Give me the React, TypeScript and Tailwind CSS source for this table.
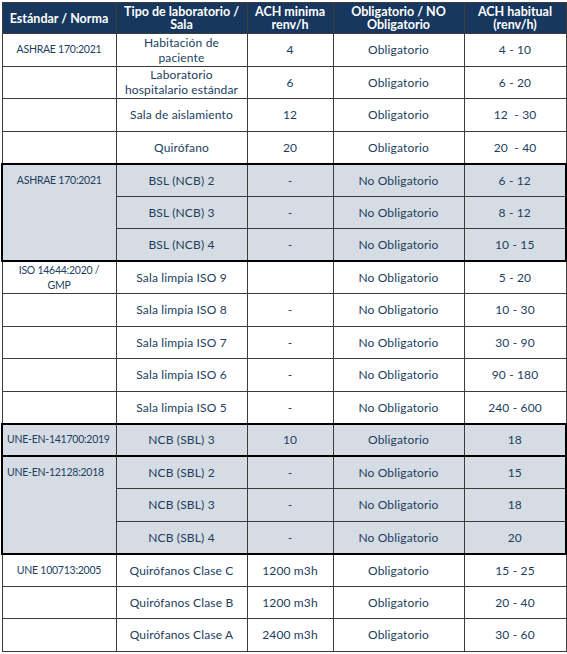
import { Fragment } from 'react'

type Row = [string, string, string, string, string]

type Group = {
	shaded: boolean
	// how the first column is drawn: one cell per row, or one spanning cell
	span?: 'center' | 'left'
	align?: 'left'
	rows: Row[]
}

const groups: Group[] = [
	{
		shaded: false,
		rows: [
			['ASHRAE 170:2021', 'Habitación de\npaciente', '4', 'Obligatorio', '4 - 10'],
			['', 'Laboratorio\nhospitalario estándar', '6', 'Obligatorio', '6 - 20'],
			['', 'Sala de aislamiento', '12', 'Obligatorio', '12  - 30'],
			['', 'Quirófano', '20', 'Obligatorio', '20  - 40'],
		],
	},
	{
		shaded: true,
		span: 'center',
		rows: [
			['ASHRAE 170:2021', 'BSL (NCB) 2', '-', 'No Obligatorio', '6 - 12'],
			['', 'BSL (NCB) 3', '-', 'No Obligatorio', '8 - 12'],
			['', 'BSL (NCB) 4', '-', 'No Obligatorio', '10 - 15'],
		],
	},
	{
		shaded: false,
		rows: [
			['ISO 14644:2020 /\nGMP', 'Sala limpia ISO 9', '', 'No Obligatorio', '5 - 20'],
			['', 'Sala limpia ISO 8', '-', 'No Obligatorio', '10 - 30'],
			['', 'Sala limpia ISO 7', '-', 'No Obligatorio', '30 - 90'],
			['', 'Sala limpia ISO 6', '-', 'No Obligatorio', '90 - 180'],
			['', 'Sala limpia ISO 5', '-', 'No Obligatorio', '240 - 600'],
		],
	},
	{
		shaded: true,
		align: 'left',
		rows: [['UNE-EN-141700:2019', 'NCB (SBL) 3', '10', 'Obligatorio', '18']],
	},
	{
		shaded: true,
		span: 'left',
		rows: [
			['UNE-EN-12128:2018', 'NCB (SBL) 2', '-', 'No Obligatorio', '15'],
			['', 'NCB (SBL) 3', '-', 'No Obligatorio', '18'],
			['', 'NCB (SBL) 4', '-', 'No Obligatorio', '20'],
		],
	},
	{
		shaded: false,
		rows: [
			['UNE 100713:2005', 'Quirófanos Clase C', '1200 m3h', 'Obligatorio', '15 - 25'],
			['', 'Quirófanos Clase B', '1200 m3h', 'Obligatorio', '20 - 40'],
			['', 'Quirófanos Clase A', '2400 m3h', 'Obligatorio', '30 - 60'],
		],
	},
]

const cell =
	'border border-[#3c3c3c] px-[2px] text-center align-middle whitespace-pre leading-[15px]'
const first =
	'border border-[#3c3c3c] px-[4px] whitespace-pre text-[10.5px] tracking-[-0.25px] leading-[15px]'

export default function App() {
	return (
		<div className="min-h-[654px] w-[567px] bg-white pl-[1px] pt-[2px]">
			<table
				className="w-[564px] table-fixed border-collapse text-[12px] tracking-[0.15px] text-[#223d60]"
				style={{ fontFamily: 'Lato, "Liberation Sans", sans-serif' }}>
				<colgroup>
					<col className="w-[114px]" />
					<col className="w-[131px]" />
					<col className="w-[86px]" />
					<col className="w-[131px]" />
					<col className="w-[102px]" />
				</colgroup>
				<thead>
					<tr className="h-[31px] bg-[#17375e] text-white">
						{[
							'Estándar / Norma',
							'Tipo de laboratorio /\nSala',
							'ACH minima\nrenv/h',
							'Obligatorio / NO\nObligatorio',
							'ACH habitual\n(renv/h)',
						].map((h) => (
							<th
								key={h}
								className="border border-[#3c3c3c] px-[2px] text-center align-middle whitespace-pre text-[12.5px] font-bold leading-[13px] tracking-normal">
								{h}
							</th>
						))}
					</tr>
				</thead>
				{groups.map((g, gi) => (
					<tbody
						key={gi}
						className={g.shaded ? 'border-2 border-black bg-[#d6dce4]' : 'bg-white'}>
						{g.rows.map((r, ri) => (
							<tr key={ri} className="h-[32.5px]">
								{g.span ? (
									ri === 0 && (
										<td
											rowSpan={g.rows.length}
											className={
												first +
												' pt-[8px] align-top ' +
												(g.span === 'left' ? 'text-left' : 'text-center')
											}>
											{r[0]}
										</td>
									)
								) : (
									<td
										className={
											first +
											' align-middle ' +
											(g.align === 'left' ? 'text-left' : 'text-center')
										}>
										{r[0]}
									</td>
								)}
								{r.slice(1).map((v, ci) => (
									<Fragment key={ci}>
										<td className={cell}>{v}</td>
									</Fragment>
								))}
							</tr>
						))}
					</tbody>
				))}
			</table>
		</div>
	)
}
